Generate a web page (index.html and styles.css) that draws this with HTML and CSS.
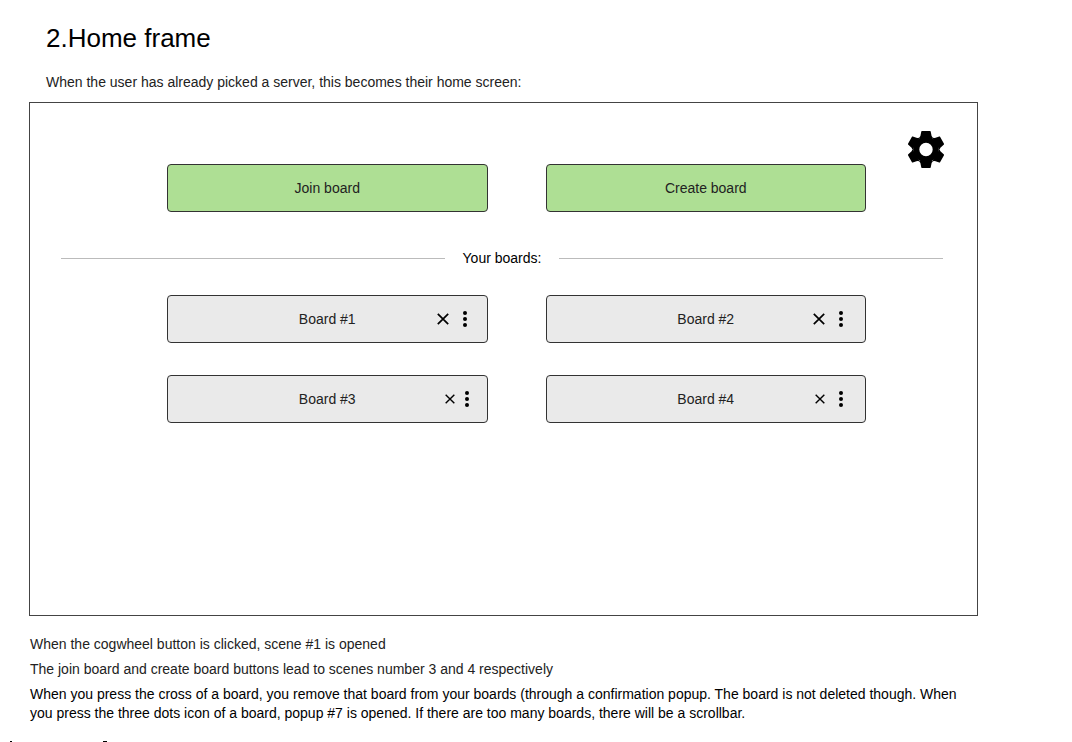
FILE: index.html
```html
<!DOCTYPE html>
<html lang="en">
<head>
<meta charset="utf-8">
<title>Home frame</title>
<link rel="stylesheet" href="styles.css">
</head>
<body>
<svg class="defs" aria-hidden="true">
  <symbol id="cross" viewBox="0 0 12 12"><path d="M0.8 0.8 11.2 11.2M11.2 0.8 0.8 11.2" fill="none" stroke="#000" stroke-width="1.7"/></symbol>
  <symbol id="dots" viewBox="0 0 4 16"><circle cx="2" cy="2" r="2"/><circle cx="2" cy="8" r="2"/><circle cx="2" cy="14" r="2"/></symbol>
  <path id="tooth" d="M-4.2-18.5H4.2L4.7-18 5.6-13.4 7-11.5H-7L-5.6-13.4-4.7-18Z"/>
</svg>
<main class="page">
  <header class="intro">
    <h1>2.Home frame</h1>
    <p>When the user has already picked a server, this becomes their home screen:</p>
  </header>
  <section class="frame">
    <button class="settings" aria-label="Settings">
      <svg viewBox="-18 -18.5 36 37">
        <circle r="9.8" fill="none" stroke="#000" stroke-width="6.2"/>
        <use href="#tooth"/>
        <use href="#tooth" transform="rotate(60)"/>
        <use href="#tooth" transform="rotate(120)"/>
        <use href="#tooth" transform="rotate(180)"/>
        <use href="#tooth" transform="rotate(240)"/>
        <use href="#tooth" transform="rotate(300)"/>
      </svg>
    </button>
    <div class="grid">
      <button class="box primary">Join board</button>
      <button class="box primary">Create board</button>
    </div>
    <h2 class="divider">Your boards:</h2>
    <div class="grid">
      <article class="box board">
        <span class="name">Board #1</span>
        <div class="actions">
          <button aria-label="Remove Board #1"><svg class="cross"><use href="#cross"/></svg></button>
          <button aria-label="Board #1 menu"><svg class="dots"><use href="#dots"/></svg></button>
        </div>
      </article>
      <article class="box board">
        <span class="name">Board #2</span>
        <div class="actions inset">
          <button aria-label="Remove Board #2"><svg class="cross"><use href="#cross"/></svg></button>
          <button aria-label="Board #2 menu"><svg class="dots"><use href="#dots"/></svg></button>
        </div>
      </article>
      <article class="box board">
        <span class="name">Board #3</span>
        <div class="actions tight">
          <button aria-label="Remove Board #3"><svg class="cross small"><use href="#cross"/></svg></button>
          <button aria-label="Board #3 menu"><svg class="dots"><use href="#dots"/></svg></button>
        </div>
      </article>
      <article class="box board">
        <span class="name">Board #4</span>
        <div class="actions inset">
          <button aria-label="Remove Board #4"><svg class="cross small"><use href="#cross"/></svg></button>
          <button aria-label="Board #4 menu"><svg class="dots"><use href="#dots"/></svg></button>
        </div>
      </article>
    </div>
  </section>
  <footer class="notes">
    <p>When the cogwheel button is clicked, scene #1 is opened</p>
    <p>The join board and create board buttons lead to scenes number 3 and 4 respectively</p>
    <p class="strong">When you press the cross of a board, you remove that board from your boards (through a confirmation popup. The board is not deleted though. When you press the three dots icon of a board, popup #7 is opened. If there are too many boards, there will be a scrollbar.</p>
  </footer>
</main>
<div class="marks" aria-hidden="true"><i class="mark"></i><i class="mark wide"></i></div>
</body>
</html>
```

FILE: styles.css
```css
* { box-sizing: border-box; }
body {
  margin: 0;
  background: #fff;
  color: #222;
  font: 14px/19px "Liberation Sans", Arial, sans-serif;
}
h1, h2, p { margin: 0; font-weight: 400; }
button { padding: 0; border: 0; background: none; color: inherit; font: inherit; cursor: pointer; }
svg { display: block; }
.defs { position: absolute; width: 0; height: 0; }

.page { padding: 22px 94px 0 29px; }
.intro { padding: 0 17px 10px; }
.intro h1 { margin-bottom: 19px; color: #000; font-size: 26px; line-height: 32px; }

.frame {
  display: flex;
  flex-direction: column;
  min-height: 514px;
  padding: 28px 33px 0 31px;
  border: 1px solid #444;
}
.settings { align-self: flex-end; width: 36px; height: 37px; }
.settings svg { width: 100%; height: 100%; fill: #000; }
.grid {
  display: grid;
  grid-template-columns: 1fr 1fr;
  gap: 32px 58px;
  padding: 0 78px 0 106px;
}
.settings + .grid { margin-top: -4px; }

.box { height: 48px; border: 1px solid #333; border-radius: 4px; }
.primary { background: #aedf94; }
.board {
  display: grid;
  grid-template-columns: 1fr auto 1fr;
  align-items: center;
  background: #eaeaea;
}
.name { grid-column: 2; }
.actions { display: flex; align-items: center; justify-content: flex-end; gap: 14px; padding-right: 20px; }
.actions.inset { padding-right: 22px; }
.actions.tight { gap: 10px; padding-right: 18px; }
.cross { width: 12px; height: 12px; }
.cross.small { width: 10px; height: 10px; }
.dots { width: 4px; height: 16px; }

.divider {
  display: flex;
  align-items: center;
  gap: 18px;
  margin: 37px 1px 27px 0;
  color: #000;
  font-size: 14px;
}
.divider::before, .divider::after { content: ""; flex: 1; height: 1px; background: #bbb; }

.notes { display: grid; gap: 6px; padding: 19px 17px 0 1px; }
.strong { color: #000; }

.marks { display: flex; gap: 91px; padding: 18px 0 0 10px; }
.mark { width: 2px; height: 1px; background: #000; }
.mark.wide { width: 4px; }
```
